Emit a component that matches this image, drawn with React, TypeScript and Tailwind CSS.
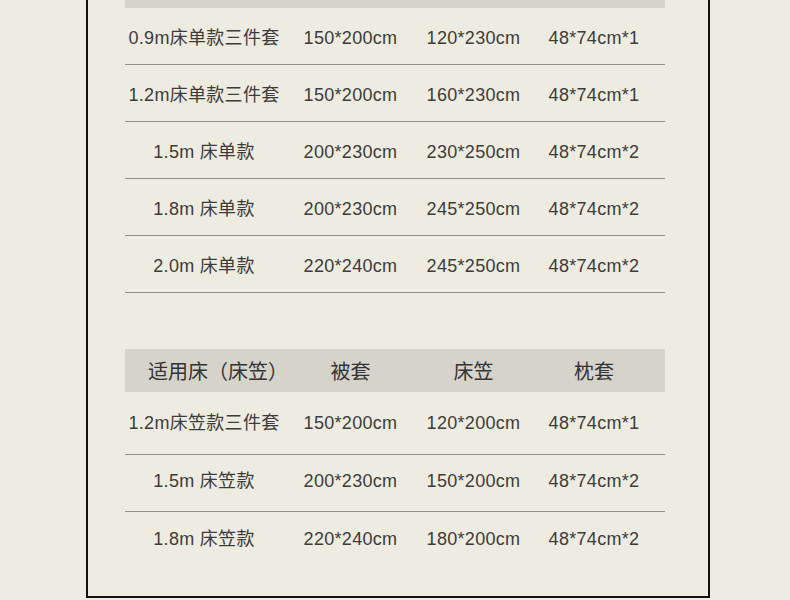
const font = {
  fontFamily: '"Liberation Sans", "Noto Sans CJK SC", sans-serif',
};

type Row = [string, string, string, string];

const sheetRows: Row[] = [
  ['0.9m床单款三件套', '150*200cm', '120*230cm', '48*74cm*1'],
  ['1.2m床单款三件套', '150*200cm', '160*230cm', '48*74cm*1'],
  ['1.5m 床单款', '200*230cm', '230*250cm', '48*74cm*2'],
  ['1.8m 床单款', '200*230cm', '245*250cm', '48*74cm*2'],
  ['2.0m 床单款', '220*240cm', '245*250cm', '48*74cm*2'],
];

const fittedRows: Row[] = [
  ['1.2m床笠款三件套', '150*200cm', '120*200cm', '48*74cm*1'],
  ['1.5m 床笠款', '200*230cm', '150*200cm', '48*74cm*2'],
  ['1.8m 床笠款', '220*240cm', '180*200cm', '48*74cm*2'],
];

const cols = 'grid grid-cols-[158px_135px_111px_130px] items-center';

function Cells({ row }: { row: Row }) {
  return (
    <>
      {row.map((c, i) => (
        <div key={i} className="flex justify-center whitespace-nowrap">
          {c}
        </div>
      ))}
    </>
  );
}

export default function App() {
  return (
    <div className="w-[790px] h-[600px] bg-[#eeebe0] overflow-hidden" style={font}>
      <div className="ml-[86px] w-[624px] h-[598px] border-x-2 border-b-2 border-[#111] pl-[37px] text-[18px] leading-[22px] tracking-[0.3px] text-[#3c3c3c]">
        {/* 床单款 */}
        <div className="w-[540px]">
          <div className="h-[8px] bg-[#d6d3cb]" />
          {sheetRows.map((r, i) => (
            <div key={i} className={`${cols} h-[57px] pt-[4px] border-b border-[#8f8d89]`}>
              <Cells row={r} />
            </div>
          ))}
        </div>

        {/* 床笠款 */}
        <div className="w-[540px] mt-[56px]">
          <div className={`${cols} h-[43px] pt-[3px] bg-[#d6d3cb] text-[20px] tracking-normal text-[#333]`}>
            <div className="pl-[23px] whitespace-nowrap">适用床（床笠）</div>
            <div className="flex justify-center">被套</div>
            <div className="flex justify-center">床笠</div>
            <div className="flex justify-center">枕套</div>
          </div>
          {fittedRows.map((r, i) => (
            <div
              key={i}
              className={
                i === 0
                  ? `${cols} h-[63px] border-b border-[#8f8d89]`
                  : i === 1
                  ? `${cols} h-[57px] pb-[4px] border-b border-[#8f8d89]`
                  : `${cols} h-[57px] pb-[4px]`
              }
            >
              <Cells row={r} />
            </div>
          ))}
        </div>
      </div>
    </div>
  );
}
